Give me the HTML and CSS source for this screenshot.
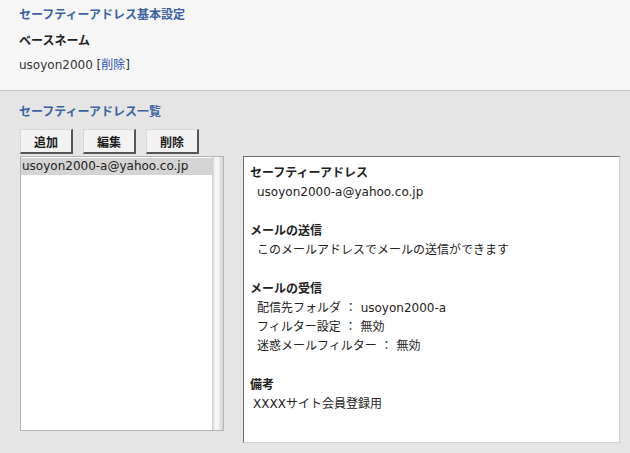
FILE: index.html
```html
<!DOCTYPE html>
<html lang="ja">

<head>
    <meta charset="UTF-8">
    <meta name="viewport" content="width=device-width, initial-scale=1.0">
    <title>セーフティーアドレス</title>
    <link rel="stylesheet" href="styles.css">
</head>

<body>
    <div class="base">
        <h2 class="title">セーフティーアドレス基本設定</h2>
        <p class="label">ベースネーム</p>
        <p class="value">usoyon2000 [<a href="#" class="link">削除</a>]</p>
    </div>

    <div class="list-area">
        <h2 class="title">セーフティーアドレス一覧</h2>
        <div class="buttons">
            <button class="btn">追加</button>
            <button class="btn">編集</button>
            <button class="btn">削除</button>
        </div>
        <div class="panes">
            <div class="listbox">
                <div class="items">
                    <div class="item selected">usoyon2000-a@yahoo.co.jp</div>
                </div>
                <div class="scrollbar"></div>
            </div>
            <div class="detail">
                <div class="group">
                    <p class="head">セーフティーアドレス</p>
                    <p class="line">usoyon2000-a@yahoo.co.jp</p>
                </div>
                <div class="group">
                    <p class="head">メールの送信</p>
                    <p class="line">このメールアドレスでメールの送信ができます</p>
                </div>
                <div class="group">
                    <p class="head">メールの受信</p>
                    <p class="line">配信先フォルダ ： usoyon2000-a</p>
                    <p class="line">フィルター設定 ： 無効</p>
                    <p class="line">迷惑メールフィルター ： 無効</p>
                </div>
                <div class="group">
                    <p class="head">備考</p>
                    <p class="line note">XXXXサイト会員登録用</p>
                </div>
            </div>
        </div>
    </div>
</body>

</html>
```

FILE: styles.css
```css
* {
    margin: 0;
    padding: 0;
    box-sizing: border-box;
}

body {
    width: 630px;
    height: 453px;
    overflow: hidden;
    background-color: #e5e5e5;
    color: #222;
    font-family: "DejaVu Sans", "Noto Sans CJK JP", sans-serif;
    font-size: 12px;
    line-height: 19px;
}

/* 上段：基本設定 */
.base {
    height: 91px;
    padding: 6px 19px 0;
    background-color: #f6f6f6;
    border-bottom: 1px solid #c6c6c6;
}

.title {
    font-size: 12px;
    font-weight: bold;
    color: #3a63a0;
    line-height: 19px;
}

.label {
    margin-top: 7px;
    font-weight: bold;
}

.value {
    margin-top: 5px;
    color: #333;
}

.link {
    color: #2a4fb0;
    text-decoration: none;
}

/* 下段：一覧 */
.list-area {
    padding: 12px 0 0 19px;
}

.buttons {
    display: flex;
    gap: 10px;
    margin: 7px 0 0 1px;
}

.btn {
    width: 53px;
    height: 25px;
    background-color: #f2f2f2;
    border-style: solid;
    border-width: 1px 2px 2px 1px;
    border-color: #d8d8d8 #555 #555 #d8d8d8;
    font-family: "DejaVu Sans", "Noto Sans CJK JP", sans-serif;
    font-size: 12px;
    font-weight: bold;
    color: #1a1a1a;
}

.panes {
    display: flex;
    align-items: flex-start;
    gap: 19px;
    margin-top: 2px;
    margin-left: 1px;
}

.listbox {
    display: flex;
    width: 204px;
    height: 275px;
    background-color: #fff;
    border: 1px solid #b4b4b4;
}

.items {
    flex: 1;
    padding-top: 1px;
}

.item {
    height: 17px;
    padding-left: 1px;
    line-height: 17px;
    font-size: 12px;
}

.selected {
    background-color: #d4d4d4;
}

.scrollbar {
    width: 11px;
    background: linear-gradient(to right, #c8c8c8 0%, #f2f2f2 25%, #f6f6f6 50%, #d2d2d2 100%);
}

.detail {
    width: 377px;
    height: 287px;
    padding: 7px 6px 0;
    background-color: #fff;
    border-style: solid;
    border-width: 1px;
    border-color: #6e6e6e #d2d2d2 #d2d2d2 #6e6e6e;
}

.group + .group {
    margin-top: 20px;
}

.head {
    font-weight: bold;
}

.line {
    padding-left: 7px;
}

.note {
    padding-left: 3px;
}
```
